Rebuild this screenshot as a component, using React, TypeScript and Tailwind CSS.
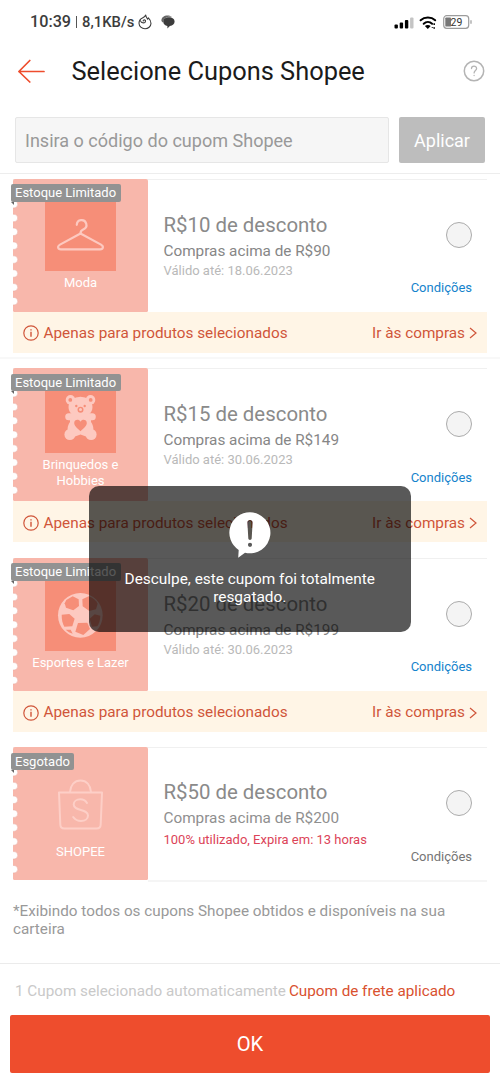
import type { ReactNode } from "react";

type Coupon = {
  badge: string;
  label: string;
  icon: ReactNode;
  tinted: boolean;
  value: string;
  minimum: string;
  note: string;
  soldOut?: boolean;
};

const Hanger = () => (
  <svg viewBox="0 0 71 71" className="size-[71px]" fill="none" stroke="#fdc9c0" strokeWidth="2.2" strokeLinecap="round" strokeLinejoin="round">
    <path d="M31.800 24.800a4.800 4.800 0 1 1 6.800 4.500c-2.300 1-3.100 2-3.100 4.200" />
    <path d="M35.500 33.500 15 44.600c-3 1.700-2.200 4.700.8 4.700h39.400c3 0 3.800-3 .8-4.700z" />
  </svg>
);

const Bear = () => (
  <svg viewBox="0 0 71 71" className="size-[71px]" fill="#fdc9c0">
    <circle cx="25.5" cy="17.9" r="4.8" />
    <circle cx="45.5" cy="17.9" r="4.8" />
    <ellipse cx="35.5" cy="25" rx="12" ry="10.2" />
    <rect x="20.2" y="31.2" width="30.6" height="7" rx="3.5" />
    <path d="M25 33h21v7c3 4 3 9 1 12H24c-2-3-2-8 1-12z" />
    <circle cx="24.9" cy="52.5" r="5.5" />
    <circle cx="46.1" cy="52.5" r="5.5" />
    <path d="M27 45h17l-3 9.500-5.500-2-5.500 2z" />
    <g fill="#f68e78">
      <circle cx="25.3" cy="17.9" r="1.9" />
      <circle cx="45.7" cy="17.9" r="1.9" />
      <circle cx="31.3" cy="24" r="1.2" />
      <circle cx="39.7" cy="24" r="1.2" />
      <circle cx="35.5" cy="27.7" r="3" />
      <path d="M35.500 49.300c-3.500-3.100-6.300-5.300-6.300-8.200 0-3.500 4.500-4.500 6.300-1.300 1.800-3.200 6.300-2.200 6.300 1.300 0 2.900-2.800 5.100-6.300 8.200z" />
    </g>
    <circle cx="35.5" cy="27.5" r="1.5" />
  </svg>
);

const Ball = () => (
  <svg viewBox="0 0 71 71" className="size-[71px]">
    <g transform="translate(5 6) scale(.3333)" fill="#f68e78">
      <circle cx="91" cy="88" r="67" fill="#fdc9c0" />
      <path d="M49 42 68 31l18 9 1 20-17 13-22-8-4-13z" />
      <path d="M97 40l19-9c13 4 22 12 27 22l-5 17-20 5-20-14z" />
      <path d="m35 86 23-2 16 14-7 23-24 1c-5-9-8-20-8-36z" />
      <path d="m119 98 15-13 17 4c0 13-4 24-9 32l-16 1z" />
      <path d="m84 111 28-1 8 19-20 18-24-10z" />
      <path d="m47 131 15 0 6 12c-8-2-15-6-21-12z" />
    </g>
  </svg>
);

const Bag = () => (
  <svg viewBox="0 0 71 71" className="size-[71px]" fill="none" stroke="#fdcfc7" strokeWidth="2" strokeLinecap="round" strokeLinejoin="round">
    <path d="M14 23.500h43l-1.300 32c-.1 2.700-1.500 4-4 4H19.300c-2.500 0-3.900-1.300-4-4z" />
    <path d="M25 23c.6-7 4.500-11.500 10.500-11.500S45.400 16 46 23" />
    <path d="M42 34c-1.700-2.600-4-3.700-6.600-3.700-3.800 0-6.700 2-6.700 5.200 0 7 14.300 4 14.300 11 0 3.400-3 5.500-7 5.500-3.200 0-5.800-1.200-7.800-4" />
  </svg>
);

const coupons: Coupon[] = [
  { badge: "Estoque Limitado", label: "Moda", icon: <Hanger />, tinted: true, value: "R$10 de desconto", minimum: "Compras acima de R$90", note: "Válido até: 18.06.2023" },
  { badge: "Estoque Limitado", label: "Brinquedos e Hobbies", icon: <Bear />, tinted: true, value: "R$15 de desconto", minimum: "Compras acima de R$149", note: "Válido até: 30.06.2023" },
  { badge: "Estoque Limitado", label: "Esportes e Lazer", icon: <Ball />, tinted: true, value: "R$20 de desconto", minimum: "Compras acima de R$199", note: "Válido até: 30.06.2023" },
  { badge: "Esgotado", label: "SHOPEE", icon: <Bag />, tinted: false, value: "R$50 de desconto", minimum: "Compras acima de R$200", note: "100% utilizado, Expira em: 13 horas", soldOut: true },
];

const notches = [25.2, 39, 52.8, 66.7, 80.6, 94.5, 108.3, 122.2];

function StatusBar() {
  return (
    <div className="flex h-11 shrink-0 items-center pr-[27px] pl-[30px] text-[#3c3c3c]">
      <span className="text-[16.2px] font-medium">10:39</span>
      <span className="mr-[5px] ml-[5px] h-3 w-px bg-[#555]" />
      <span className="text-[14.8px] font-medium">8,1KB/s</span>
      <svg viewBox="0 0 14 16" className="ml-1 h-4 w-3.5 shrink-0" fill="none" stroke="#3c3c3c" strokeWidth="1.1" strokeLinecap="round" strokeLinejoin="round">
        <path d="M7.700 1c.3 2.200 1.300 2.700 1.800 4.200.5-.4.800-.8.900-1.300 1.500 1.500 2.600 3.400 2.600 5.600A6 5.600 0 0 1 7 14.800a6 5.600 0 0 1-6-5.500c0-2.500 1.600-4.300 3.400-5.200C6 3.200 7.200 2.400 7.700 1z" />
        <path d="M2.500 6.800c.8 2.800 4.800 2.600 5 .4.100-1.700-2.400-1.700-2.300-.2" />
      </svg>
      <svg viewBox="0 0 14 14" className="ml-[9px] size-3.5 shrink-0" fill="#3c3c3c">
        <path d="M.4 5.500C.4 2.500 3 .5 6.500.5c2 0 3.700.6 4.700 1.500-4.500-.8-9 1-9.200 5.500C1 7 .4 6.300.4 5.500z" fill="#666" />
        <path d="M2.200 6.600c0-2.700 2.400-4.400 5.700-4.400s5.700 1.700 5.700 4.400c0 2.500-2 4.200-4.700 4.500L6.400 13.500V11C4 10.600 2.200 9 2.200 6.600z" />
      </svg>
      <svg viewBox="0 0 80 16" className="ml-auto h-4 w-20 shrink-0">
        <rect x="1.5" y="10.5" width="3.4" height="4" rx="1" fill="#000" />
        <rect x="6.7" y="8.5" width="3.4" height="6" rx="1" fill="#000" />
        <rect x="11.9" y="6" width="3.4" height="8.5" rx="1" fill="#000" />
        <rect x="17.1" y="3.5" width="3.4" height="11" rx="1" fill="#c4c4c4" />
        <g fill="none" stroke="#000" strokeWidth="2" strokeLinecap="round">
          <path d="M27.600 6.300c4-3.600 10.600-3.600 14.600 0" />
          <path d="M30.700 9.700c2.400-2.200 6-2.200 8.400 0" />
        </g>
        <path d="m31.900 12 2.900 3 2.900-3c-1.600-1.500-4.200-1.500-5.800 0z" fill="#000" />
        <path d="M41.200 9.300v1.600m0 2.300v1.600m-1.800-1.900v.9" stroke="#000" strokeWidth="1.5" />
        <rect x="50.7" y="1.7" width="25" height="12.6" rx="3" fill="none" stroke="#9c9c9c" strokeWidth="1.2" />
        <rect x="52.3" y="3.4" width="5.7" height="9.2" rx=".9" fill="#777" />
        <path d="M78 6.200v3.600" stroke="#9c9c9c" strokeWidth="1.2" />
        <text x="63.5" y="12" textAnchor="middle" fontSize="10.5" fontFamily="Roboto, sans-serif" fill="#333">29</text>
      </svg>
    </div>
  );
}

function CouponCard({ coupon }: { coupon: Coupon }) {
  return (
    <article className="relative mx-[13px]">
      <div className="flex h-[133.2px] border-t border-t-[#f0f0f0]">
        <div className="relative -mt-px flex w-[135px] shrink-0 flex-col items-center justify-center">
          <svg viewBox="0 0 135 133.2" className="absolute inset-0 h-full w-full">
            <rect width="135" height="133.2" rx="2" fill="#f8b7ab" />
            {notches.map((y) => (
              <circle key={y} cx="0.9" cy={y} r="3.8" fill="#fff" stroke="#e9aaa0" strokeWidth=".5" />
            ))}
          </svg>
          <div className={coupon.tinted ? "relative mt-px bg-[#f68e78]" : "relative mt-px"}>{coupon.icon}</div>
          <p className="relative mt-1 w-[110px] text-center text-[13px] leading-[15.2px] text-white">{coupon.label}</p>
        </div>
        <div className="flex grow justify-between pr-[15px] pl-[15.5px]">
          <div className={coupon.soldOut ? "pt-[31.2px]" : "pt-[32.4px]"}>
            <h2 className="text-[20.4px] leading-[26px] text-[#8a8a8a]">{coupon.value}</h2>
            <p className={coupon.soldOut ? "mt-px text-[15.3px] leading-6 text-[#8f8f8f]" : "mt-px text-[15.3px] leading-6 text-[#868686]"}>{coupon.minimum}</p>
            <p className={coupon.soldOut ? "mt-[1.8px] text-[13px] leading-4 text-[#dc4358]" : "text-[13px] leading-4 text-[#b9b9b9]"}>{coupon.note}</p>
          </div>
          <div className="-ml-20 flex flex-col items-end pt-[42px]">
            <span className="size-[26px] rounded-full border border-[#ababab] bg-[#f4f4f4]" />
            <a className={coupon.soldOut ? "mt-[31px] text-[13px] leading-5 text-[#757575]" : "mt-[30.6px] text-[13px] leading-5 text-[#1583cc]"}>Condições</a>
          </div>
        </div>
      </div>
      {coupon.soldOut ? (
        <div className="ml-[135px] h-0.5 bg-[#f5f5f5]" />
      ) : (
        <div className="flex h-[41px] items-center bg-[#fff5e6] pt-[2.6px] pr-2.5 pl-2.5 text-[15.3px] text-[#d0553a]">
          <svg viewBox="0 0 16 16" className="mr-[4.5px] size-4" fill="none" stroke="currentColor" strokeWidth="1.2">
            <circle cx="8" cy="8" r="7.2" />
            <path d="M8 6.800v5M8 4.200v1.400" strokeWidth="1.4" />
          </svg>
          <span className="grow">Apenas para produtos selecionados</span>
          <span>Ir às compras</span>
          <svg viewBox="0 0 8 12" className="ml-1 h-3 w-2" fill="none" stroke="currentColor" strokeWidth="1.2">
            <path d="m1 1 6 5-6 5" />
          </svg>
        </div>
      )}
      <div className="absolute top-[5.5px] -left-[2.5px]">
        <span className="block rounded-[2px] bg-[#929292] px-[4.5px] text-[13px] leading-[17.5px] text-white">{coupon.badge}</span>
        <svg viewBox="0 0 3 3" className="absolute top-full left-0 size-[3px]">
          <path d="M0 0h3v3z" fill="#666" />
        </svg>
      </div>
    </article>
  );
}

function Toast() {
  return (
    <div role="alert" className="absolute top-[486px] left-[89px] flex h-[145.5px] w-[321.5px] flex-col items-center rounded-[10px] bg-black/65 pt-[25.5px] text-white">
      <svg viewBox="0 0 42 46" className="h-[46px] w-[42px]" fill="#fff" fillRule="evenodd">
        <path d="M21 .3a20.500 20.500 0 1 1-5 40.400L9.200 45.800 9.700 38A20.500 20.500 0 0 1 21 .3zM21 8c-1.700 0-2.700 1.200-2.600 2.800l.9 15.500c.1 2.200 3.300 2.200 3.400 0l.9-15.500C23.700 9.200 22.700 8 21 8zm0 22.700a2.100 2.100 0 1 0 0 4.200 2.100 2.100 0 0 0 0-4.200z" />
      </svg>
      <p className="mt-[12.5px] w-[270px] text-center text-[15.4px] leading-[18px]">Desculpe, este cupom foi totalmente resgatado.</p>
    </div>
  );
}

export default function App() {
  return (
    <main className="relative flex h-[1083px] w-[500px] flex-col overflow-hidden bg-white font-['Roboto',sans-serif]">
      <StatusBar />
      <header className="flex h-[54px] shrink-0 items-center pr-[15px] pl-[18px]">
        <svg viewBox="0 0 27 24" className="h-6 w-[27px]" fill="none" stroke="#ee4d2d" strokeWidth="1.7" strokeLinecap="round" strokeLinejoin="round">
          <path d="M26 12.500H.9M11.800 1.500.9 12.500l10.900 10.500" />
        </svg>
        <h1 className="ml-[26.5px] grow text-[25.4px] text-[#1b1b1b]">Selecione Cupons Shopee</h1>
        <svg viewBox="0 0 22 22" className="size-[22px]" fill="none" stroke="#b4b4b4" strokeWidth="1.5" strokeLinecap="round">
          <circle cx="11" cy="11" r="9.7" />
          <path d="M8.500 8.600c0-3.300 5.100-3.200 5.100-.2 0 2-2.500 2.200-2.500 4.500M11.100 15.400v.2" strokeWidth="1.3" />
        </svg>
      </header>
      <section className="flex h-[76px] shrink-0 items-start gap-2.5 border-b border-[#ededed] px-[15px] pt-[19px]">
        <div className="flex h-[46px] w-[374px] items-center rounded-[2px] border border-[#e6e6e6] bg-[#f6f6f6] pt-0.5 pl-[9px] text-[18.05px] text-[#999]">Insira o código do cupom Shopee</div>
        <button className="h-[46px] grow rounded-[2px] bg-[#bdbdbd] pt-px text-[18px] text-white">Aplicar</button>
      </section>
      <section className="flex grow flex-col pt-[4.5px]">
        {coupons.map((coupon, index) => (
          <div key={coupon.value} className={index === 3 ? "" : "h-[189.6px]"}>
            <CouponCard coupon={coupon} />
            {index === 0 && <div className="mt-1 h-0.5 bg-[#f8f8f8]" />}
          </div>
        ))}
        <p className="mt-5 ml-[13px] w-[450px] text-[15.28px] leading-[18px] text-[#999]">*Exibindo todos os cupons Shopee obtidos e disponíveis na sua carteira</p>
      </section>
      <footer className="flex h-[120px] shrink-0 flex-col border-t border-[#ebebeb] px-2.5">
        <p className="flex h-[51px] items-center gap-[3px] pt-[3px] pl-[5px] text-[15.25px] text-[#c9c9c9]">
          1 Cupom selecionado automaticamente
          <span className="text-[#d9512f]">Cupom de frete aplicado</span>
        </p>
        <button className="h-[58px] rounded-[2px] bg-[#ee4d2d] pt-px text-[20.2px] text-white">OK</button>
      </footer>
      <Toast />
    </main>
  );
}
